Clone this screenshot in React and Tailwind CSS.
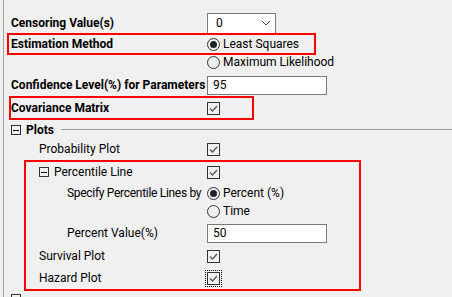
import React from 'react';

function Check({ focused }) {
    const box = (
        <div className="flex h-[13px] w-[13px] items-center justify-center border border-[#333]">
            <svg width="11" height="11" viewBox="0 0 11 11">
                <path d="M2 5.5 L4.5 8 L9 3" fill="none" stroke="#555" strokeWidth="1.3" />
            </svg>
        </div>
    );
    if (!focused) return box;
    return <div className="-m-[2px] border border-dotted border-black p-px">{box}</div>;
}

function Radio({ checked, label }) {
    return (
        <div className="flex items-center gap-[3px]">
            <div className="flex h-[13px] w-[13px] items-center justify-center rounded-full border border-[#333]">
                {checked && <div className="h-[7px] w-[7px] rounded-full bg-[#222]" />}
            </div>
            <span>{label}</span>
        </div>
    );
}

function Expander() {
    return (
        <div className="flex h-[10px] w-[10px] items-center justify-center border border-[#333]">
            <div className="h-px w-[6px] bg-[#111]" />
        </div>
    );
}

function Row({ className, label, labelClass, children }) {
    return (
        <div className={'flex h-[18px] items-center ' + className}>
            <div className={'w-[196px] shrink-0 whitespace-nowrap ' + labelClass}>{label}</div>
            <div className="flex items-center">{children}</div>
        </div>
    );
}

export default function App() {
    return (
        <div
            className="relative h-[297px] w-[452px] overflow-hidden bg-[#f0f0f0] text-[12px] leading-none text-black"
            style={{ fontFamily: 'Roboto, "Noto Sans", sans-serif' }}
        >
            <div className="ml-[3px] h-full border-l border-[#a0a0a0] pl-[7px] pt-[14px]">
                <Row label="Censoring Value(s)" labelClass="font-bold">
                    <div className="flex h-[21px] w-[69px] items-center justify-between border border-[#7a7a7a] bg-white pl-[8px] pr-[4px]">
                        <span>0</span>
                        <svg width="10" height="6" viewBox="0 0 10 6">
                            <path d="M1 1 L5 5 L9 1" fill="none" stroke="#444" strokeWidth="1" />
                        </svg>
                    </div>
                </Row>
                <Row className="mt-[3px]" label="Estimation Method" labelClass="font-bold">
                    <Radio checked label="Least Squares" />
                </Row>
                <Row label="" labelClass="">
                    <Radio label="Maximum Likelihood" />
                </Row>
                <Row className="mt-[5px]" label="Confidence Level(%) for Parameters" labelClass="font-bold">
                    <div className="flex h-[19px] w-[120px] items-center border border-[#7a7a7a] bg-white pl-[5px]">
                        95
                    </div>
                </Row>
                <Row className="mt-[5px]" label="Covariance Matrix" labelClass="font-bold">
                    <Check />
                </Row>
                <div className="mt-[4px] flex h-[18px] items-center">
                    <Expander />
                    <span className="ml-[5px] font-bold">Plots</span>
                    <div className="ml-[7px] -mt-[2px] h-px flex-1 bg-[#a0a0a0]" />
                </div>
                <Row className="mt-px" label="Probability Plot" labelClass="pl-[28px]">
                    <Check />
                </Row>
                <Row
                    className="mt-[5px]"
                    label={
                        <div className="flex items-center">
                            <Expander />
                            <span className="ml-[5px]">Percentile Line</span>
                        </div>
                    }
                    labelClass="pl-[28px]"
                >
                    <Check />
                </Row>
                <Row
                    className="mt-[3px]"
                    label="Specify Percentile Lines by"
                    labelClass="pl-[56px] tracking-[-0.3px]"
                >
                    <Radio checked label="Percent (%)" />
                </Row>
                <Row label="" labelClass="">
                    <Radio label="Time" />
                </Row>
                <Row className="mt-[4px]" label="Percent Value(%)" labelClass="pl-[56px]">
                    <div className="flex h-[19px] w-[120px] items-center border border-[#7a7a7a] bg-white pl-[5px]">
                        50
                    </div>
                </Row>
                <Row className="mt-[5px]" label="Survival Plot" labelClass="pl-[28px]">
                    <Check />
                </Row>
                <Row className="mt-[4px]" label="Hazard Plot" labelClass="pl-[28px]">
                    <Check focused />
                </Row>
                <div className="mt-[7px] flex items-center">
                    <Expander />
                </div>
            </div>

            {/* highlight boxes */}
            <div className="absolute left-[7px] top-[33px] h-[22px] w-[309px] border-2 border-[#ff0000]" />
            <div className="absolute left-[9px] top-[96px] h-[24px] w-[245px] border-2 border-[#ff0000]" />
            <div className="absolute left-[24px] top-[160px] h-[131px] w-[337px] border-2 border-[#ff0000]" />
        </div>
    );
}
